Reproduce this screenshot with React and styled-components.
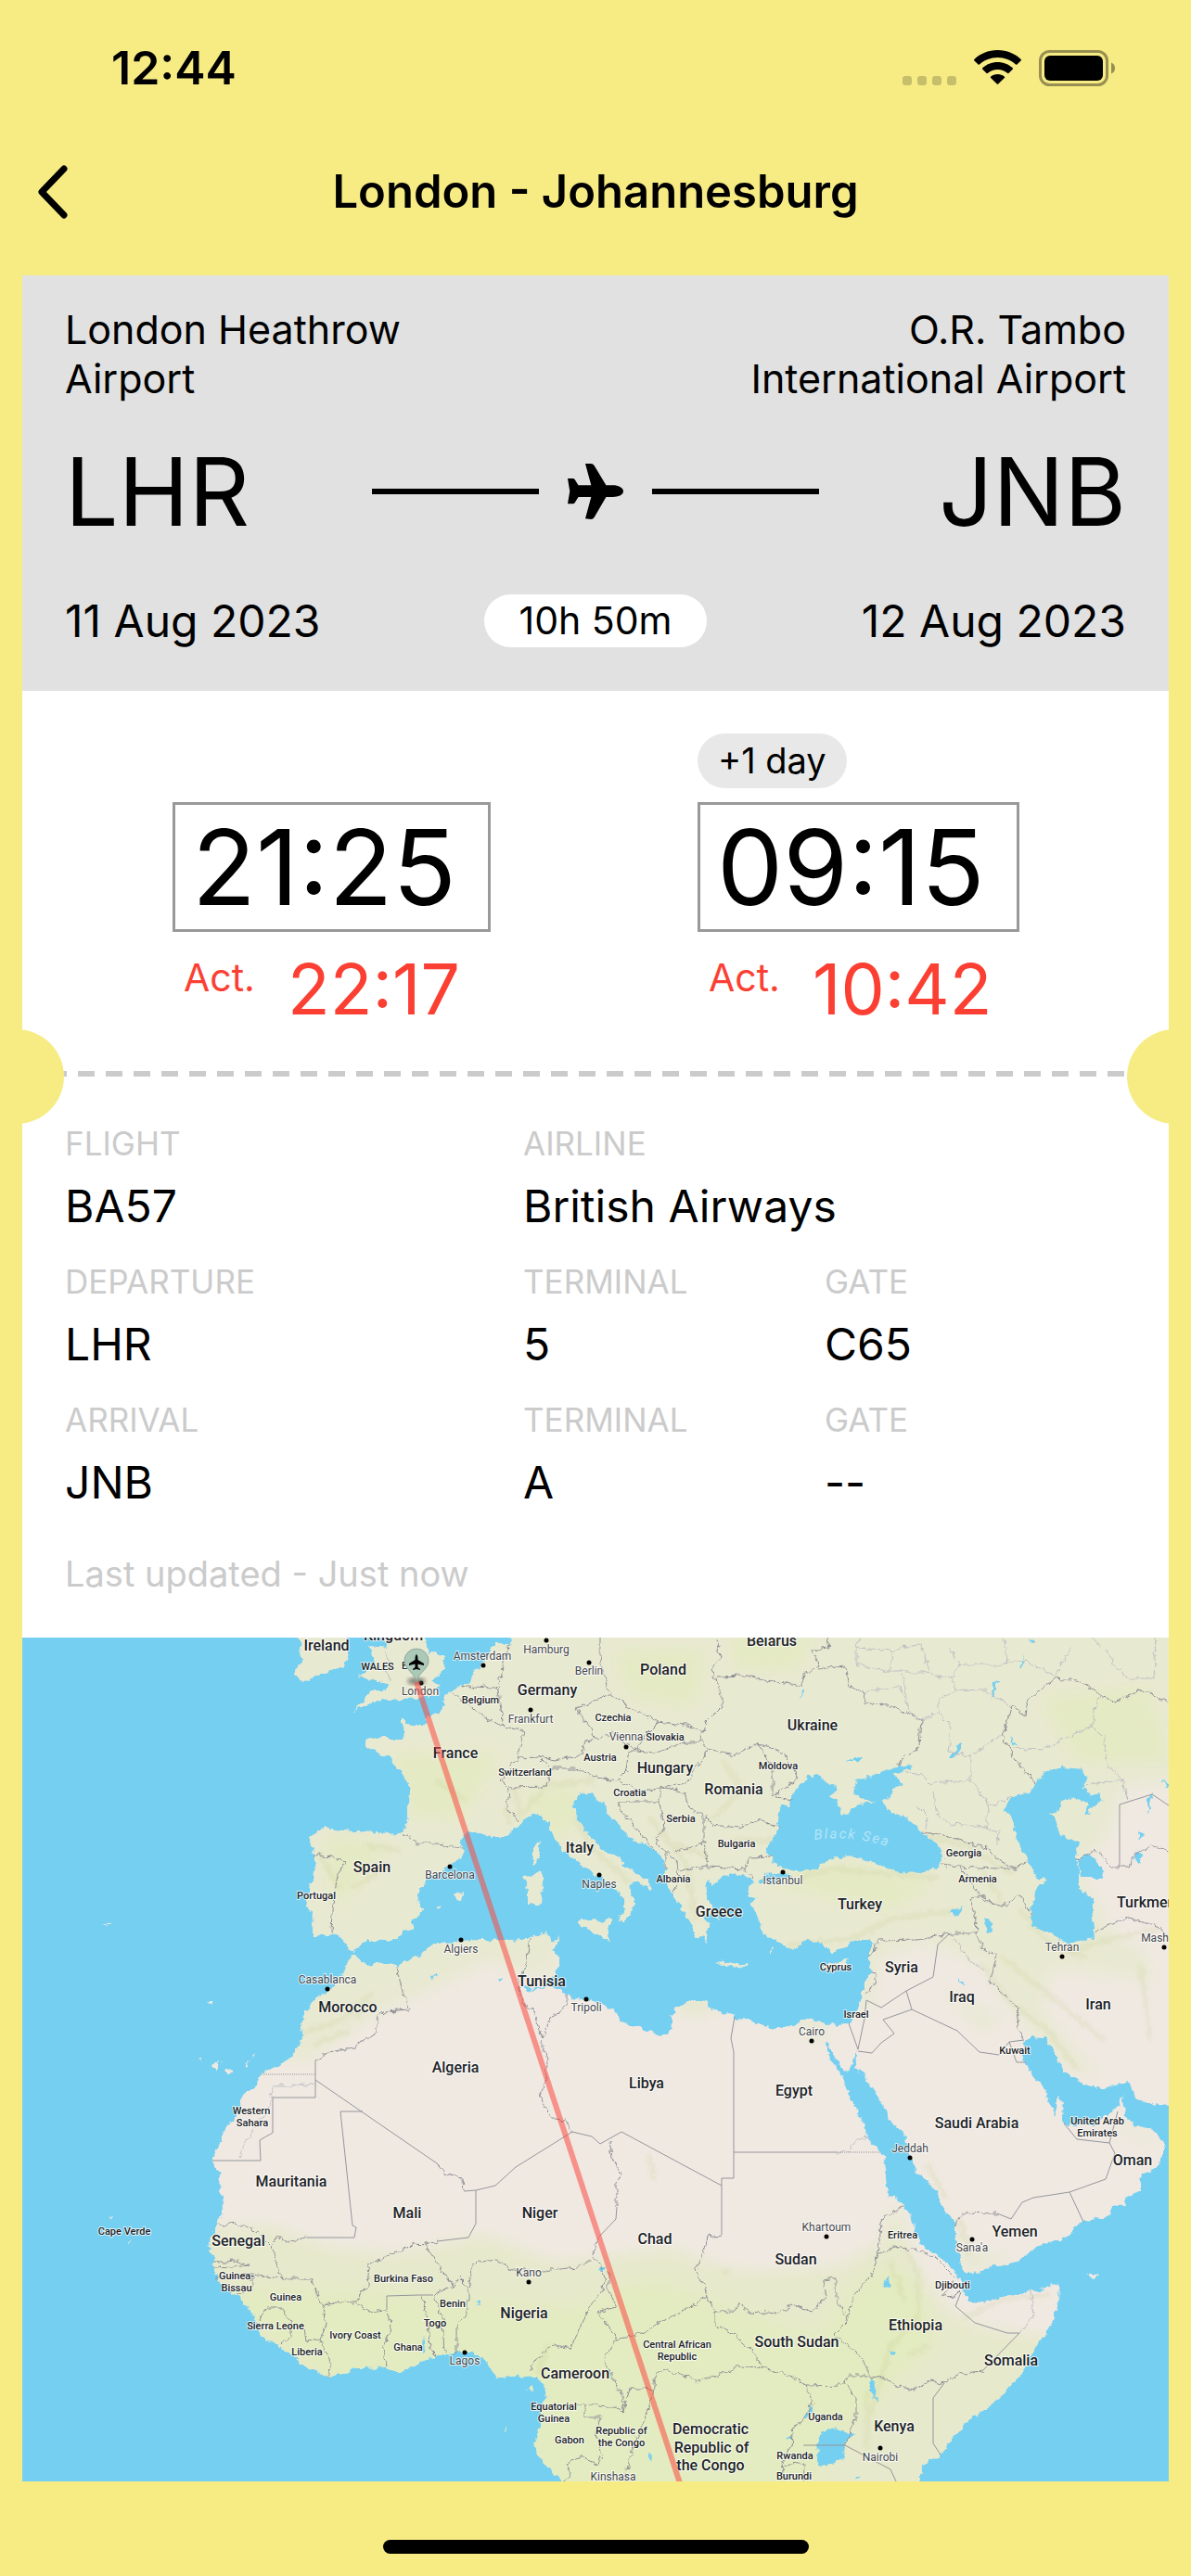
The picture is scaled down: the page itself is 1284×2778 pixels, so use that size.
import styled, { createGlobalStyle } from "styled-components";

const YELLOW = "#f7ec84";
const SEA = "#75cff0";

const GlobalStyle = createGlobalStyle`
    * {
        box-sizing: border-box;
        margin: 0;
        padding: 0;
    }

    body {
        background-color: ${YELLOW};
        color: black;
        font-family: Inter, "Liberation Sans", sans-serif;
        overflow-x: hidden;
    }
`;

const Screen = styled.div`
    width: 100%;
    overflow: hidden;
`;

const StatusBar = styled.div`
    display: flex;
    justify-content: space-between;
    padding: 48px 82px 19px 120px;
`;

const Clock = styled.time`
    font-size: 50px;
    line-height: 50px;
    font-weight: 600;
`;

const StatusIcons = styled.div`
    display: flex;
    align-items: center;
    gap: 19px;
`;

const Header = styled.header`
    display: grid;
    grid-template-columns: 100px 1fr 100px;
    align-items: center;
    height: 180px;
`;

const BackButton = styled.button`
    display: flex;
    align-items: center;
    height: 100px;
    padding-left: 38px;
    border: none;
    background: none;
    cursor: pointer;
`;

const Title = styled.h1`
    font-size: 49px;
    line-height: 60px;
    font-weight: 600;
    text-align: center;
`;

const Ticket = styled.main`
    margin: 0 24px;
    background-color: white;
`;

const Summary = styled.section`
    padding: 32px 46px 47px;
    background-color: #e1e1e1;
`;

const Airports = styled.div`
    display: flex;
    justify-content: space-between;
    font-size: 43px;
    line-height: 53px;
`;

const AirportName = styled.p`
    width: 430px;
    text-align: ${({ $end }) => ($end ? "right" : "left")};
`;

const Codes = styled.div`
    display: grid;
    grid-template-columns: 1fr auto 1fr;
    align-items: center;
    margin: 42px 0 58px;
`;

const Code = styled.strong`
    font-size: 102px;
    line-height: 106px;
    font-weight: 400;
    text-align: ${({ $end }) => ($end ? "right" : "left")};
`;

const Track = styled.div`
    display: flex;
    align-items: center;
    gap: 31px;
`;

const TrackLine = styled.span`
    width: 180px;
    height: 6px;
    background-color: black;
`;

const Dates = styled.div`
    display: grid;
    grid-template-columns: 1fr auto 1fr;
    align-items: center;
`;

const FlightDate = styled.time`
    font-size: 48px;
    line-height: 57px;
    text-align: ${({ $end }) => ($end ? "right" : "left")};
`;

const Duration = styled.span`
    padding: 0 37px;
    border-radius: 29px;
    background-color: white;
    font-size: 41px;
    line-height: 57px;
`;

const Times = styled.section`
    display: grid;
    grid-template-columns: 566fr 508fr;
    padding: 46px 0 5px 162px;
`;

const TimeColumn = styled.div`
    display: flex;
    flex-direction: column;
    align-items: flex-start;
`;

const DayShift = styled.div`
    height: 59px;
    margin-bottom: 15px;
`;

const DayBadge = styled.span`
    display: block;
    padding: 0 22px;
    border-radius: 30px;
    background-color: #e8e8e8;
    font-size: 38px;
    line-height: 59px;
`;

const Scheduled = styled.time`
    padding: 0 34px 0 18px;
    border: 3px solid #999999;
    font-size: 113px;
    line-height: 134px;
`;

const Actual = styled.div`
    display: flex;
    gap: 35px;
    margin: 24px 0 0 12px;
    color: #fb4033;
    font-size: 41px;
    line-height: 50px;
`;

const ActualTime = styled.time`
    font-size: 75px;
    line-height: 76px;
`;

const Tear = styled.div`
    position: relative;
    height: 102px;
    padding-top: 45px;
`;

const TearLine = styled.div`
    height: 6px;
    background: repeating-linear-gradient(to right, #cbcbcb 0 18px, transparent 18px 30px);
`;

const Notch = styled.span`
    position: absolute;
    top: 0;
    ${({ $side }) => $side}: -57px;
    width: 102px;
    height: 102px;
    border-radius: 50%;
    background-color: ${YELLOW};
`;

const Details = styled.dl`
    display: grid;
    grid-template-columns: 494fr 325fr 325fr;
    row-gap: 30px;
    margin: 0 46px;
`;

const Detail = styled.div`
    display: flex;
    flex-direction: column;
    gap: 17px;
    grid-column: span ${({ $span }) => $span || 1};
`;

const DetailLabel = styled.dt`
    color: #cbcbcb;
    font-size: 35px;
    line-height: 42px;
    text-transform: uppercase;
`;

const DetailValue = styled.dd`
    font-size: 48px;
    line-height: 60px;
`;

const Updated = styled.p`
    padding: 44px 46px 45px;
    color: #cbcbcb;
    font-size: 38px;
    line-height: 48px;
`;

const MapDrawing = styled.svg`
    display: block;
    width: 100%;
    height: auto;
    font-family: Roboto, "Open Sans", sans-serif;
`;

const CountryLabel = styled.text`
    fill: #202326;
    font-size: ${({ $small }) => ($small ? 11 : 16)}px;
    font-weight: 500;
    text-anchor: ${({ $start }) => ($start ? "start" : "middle")};
    paint-order: stroke;
    stroke: rgba(255, 255, 255, 0.75);
    stroke-width: 2px;
    stroke-linejoin: round;
`;

const CityLabel = styled(CountryLabel)`
    fill: #44474b;
    font-size: 12px;
    font-weight: 400;
`;

const SeaLabel = styled.text`
    fill: #b5e6fa;
    font-size: 15px;
    font-style: italic;
    letter-spacing: 2px;
`;

const HomeArea = styled.footer`
    display: flex;
    justify-content: center;
    padding: 63px 0 24px;
`;

const HomeIndicator = styled.span`
    width: 459px;
    height: 15px;
    border-radius: 8px;
    background-color: black;
`;

const details = [
    { label: "Flight", value: "BA57" },
    { label: "Airline", value: "British Airways", span: 2 },
    { label: "Departure", value: "LHR" },
    { label: "Terminal", value: "5" },
    { label: "Gate", value: "C65" },
    { label: "Arrival", value: "JNB" },
    { label: "Terminal", value: "A" },
    { label: "Gate", value: "--" },
];

const countries = [
    ["Ireland", 352, 1780], ["Kingdom", 424, 1769], ["France", 491, 1896], ["Germany", 590, 1828],
    ["Spain", 401, 2019], ["Italy", 625, 1998], ["Poland", 715, 1806], ["Belarus", 832, 1775],
    ["Ukraine", 876, 1866], ["Hungary", 717, 1912], ["Romania", 791, 1935], ["Greece", 775, 2067],
    ["Turkey", 927, 2059], ["Morocco", 375, 2170], ["Tunisia", 584, 2142], ["Algeria", 491, 2235],
    ["Mauritania", 314, 2358], ["Libya", 697, 2252], ["Egypt", 856, 2260], ["Syria", 972, 2127],
    ["Iraq", 1037, 2159], ["Iran", 1184, 2167], ["Saudi Arabia", 1053, 2295], ["Oman", 1221, 2335],
    ["Mali", 439, 2392], ["Niger", 582, 2392], ["Senegal", 257, 2422], ["Nigeria", 565, 2500],
    ["Cameroon", 620, 2565], ["Chad", 706, 2420], ["Sudan", 858, 2442], ["South Sudan", 859, 2531],
    ["Ethiopia", 987, 2513], ["Yemen", 1094, 2412], ["Somalia", 1090, 2551], ["Kenya", 964, 2622],
    ["Democratic", 766, 2625], ["Republic of", 767, 2645], ["the Congo", 766, 2664],
];

const smallCountries = [
    ["Belgium", 518, 1837], ["Switzerland", 566, 1915], ["Czechia", 661, 1856], ["Slovakia", 717, 1877],
    ["Austria", 647, 1899], ["Croatia", 679, 1937], ["Serbia", 734, 1965], ["Moldova", 839, 1908],
    ["Bulgaria", 794, 1992], ["Albania", 726, 2030], ["Georgia", 1039, 2002], ["Armenia", 1054, 2030],
    ["Portugal", 341, 2048], ["Cyprus", 901, 2125], ["Israel", 923, 2176], ["Kuwait", 1094, 2215],
    ["United Arab", 1183, 2291], ["Emirates", 1183, 2304], ["Western", 271, 2280], ["Sahara", 272, 2293],
    ["Cape Verde", 134, 2410], ["Guinea-", 255, 2458], ["Bissau", 255, 2471], ["Guinea", 308, 2481],
    ["Sierra Leone", 297, 2512], ["Liberia", 331, 2540], ["Ivory Coast", 383, 2522], ["Ghana", 440, 2535],
    ["Togo", 469, 2509], ["Benin", 488, 2488], ["Burkina Faso", 435, 2461], ["Equatorial", 597, 2599],
    ["Guinea", 597, 2612], ["Gabon", 614, 2635], ["Republic of", 670, 2625], ["the Congo", 670, 2638],
    ["Central African", 730, 2532], ["Republic", 730, 2545], ["Eritrea", 973, 2414], ["Djibouti", 1027, 2468],
    ["Uganda", 890, 2610], ["Rwanda", 857, 2652], ["Burundi", 856, 2674],
];

// name, label x, label y, dot x, dot y
const cities = [
    ["London", 453, 1828, 454, 1815], ["Amsterdam", 520, 1790, 521, 1796], ["Hamburg", 589, 1783, 589, 1769],
    ["Berlin", 635, 1806, 635, 1793], ["Frankfurt", 572, 1858, 572, 1844], ["Vienna", 675, 1877, 675, 1884],
    ["Barcelona", 485, 2026, 485, 2013], ["Naples", 646, 2036, 646, 2022], ["Istanbul", 844, 2032, 844, 2019],
    ["Algiers", 497, 2106, 497, 2092], ["Casablanca", 353, 2139, 353, 2145], ["Tripoli", 632, 2169, 632, 2156],
    ["Cairo", 875, 2195, 875, 2201], ["Tehran", 1145, 2104, 1145, 2110], ["Mashhad", 1255, 2094, 1255, 2100],
    ["Jeddah", 981, 2321, 981, 2327], ["Khartoum", 891, 2406, 891, 2412], ["Sana'a", 1048, 2428, 1048, 2415],
    ["Kano", 570, 2455, 570, 2461], ["Lagos", 501, 2550, 501, 2537], ["Nairobi", 949, 2654, 949, 2640],
    ["Kinshasa", 661, 2675, 661, 2690],
];

const MAINLAND = `M551 1740V1768L549 1773 532 1773 528 1780 522 1793 511 1803 507 1815 488 1823 479 1827 478 1840 471 1848 459 1853
457 1861 445 1861 438 1858 438 1855 431 1855 435 1863 436 1876 421 1876 415 1873 396 1875 394 1880 398 1887 408 1890 421 1897
429 1908 440 1923 441 1933 440 1953 437 1973 429 1978 404 1976 379 1975 358 1973 351 1970 345 1975 333 1982 338 1993 340 2017
330 2050 333 2062 338 2063 337 2087 349 2088 364 2086 370 2092 375 2100 381 2105 385 2100 396 2093 429 2092 434 2082 445 2079
446 2070 457 2059 450 2050 452 2037 463 2023 476 2017 488 2009 499 2002 498 1993 496 1983 503 1975 518 1977 537 1982 547 1979
558 1970 566 1960 575 1957 585 1960 593 1967 598 1983 608 1997 623 2007 636 2017 647 2024 663 2035 671 2047 672 2060 667 2071
673 2073 678 2063 685 2053 679 2043 678 2033 683 2028 697 2035 701 2039 704 2035 693 2025 675 2013 669 2003 652 1997 643 1988
631 1975 621 1962 619 1943 623 1937 639 1933 648 1945 652 1943 656 1957 667 1968 681 1983 704 1993 716 2005 718 2017 716 2023
722 2040 737 2060 741 2068 748 2078 749 2090 757 2089 762 2096 761 2082 767 2077 757 2070 767 2065 776 2073 773 2065 763 2050
761 2033 763 2027 769 2033 776 2025 792 2020 806 2023 812 2029 808 2032 806 2045 817 2047 810 2055 817 2067 821 2073 823 2087
833 2090 845 2098 858 2102 866 2092 882 2095 897 2105 911 2100 923 2092 938 2092 941 2097 937 2107 938 2127 932 2143 924 2167
916 2182 891 2184 872 2177 858 2182 845 2188 825 2185 804 2177 792 2178 790 2172 767 2167 763 2159 749 2156 728 2165 724 2175
725 2188 712 2197 693 2187 669 2182 661 2167 648 2161 631 2157 610 2152 604 2145 589 2143 574 2147 572 2145 585 2143 593 2135
604 2120 602 2110 596 2105 604 2088 597 2095 591 2085 585 2084 568 2091 535 2093 522 2092 497 2093 467 2097 455 2108 442 2112
429 2121 415 2117 396 2119 387 2115 382 2107 377 2110 372 2127 354 2147 335 2160 324 2180 327 2197 318 2215 299 2229 281 2235
276 2250 262 2259 255 2282 244 2293 236 2315 229 2327 229 2333 237 2345 236 2360 242 2372 236 2397 223 2423 231 2433 231 2450
240 2465 257 2477 274 2497 284 2520 303 2532 337 2557 354 2564 383 2554 415 2553 429 2559 459 2545 490 2537 511 2537 522 2543
535 2564 568 2562 585 2570 589 2583 583 2600 583 2620 575 2635 581 2648 593 2663 606 2676V2710H990V2676L995 2658 1014 2647
1036 2618 1075 2588 1100 2563 1116 2533 1135 2502 1141 2483 1142 2465 1135 2463 1129 2468 1088 2475 1059 2483 1047 2482
1036 2467 1036 2460 1030 2452 1018 2437 993 2420 987 2407 981 2387 969 2373 958 2367 954 2333 950 2320 934 2305 932 2290
919 2267 907 2237 893 2217 890 2203 894 2204 899 2217 909 2232 915 2234 919 2223 923 2210 924 2218 921 2230 927 2232 942 2253
956 2277 958 2287 973 2297 981 2323 989 2343 1006 2358 1016 2380 1030 2398 1030 2420 1036 2437 1038 2450 1055 2452 1067 2445
1100 2437 1120 2422 1153 2412 1157 2402 1168 2396 1194 2390 1199 2380 1213 2378 1215 2368 1229 2363 1231 2343 1244 2340
1252 2327 1258 2315 1244 2298 1223 2293 1213 2282 1211 2260 1205 2273 1190 2282 1178 2292 1149 2292 1145 2285 1146 2267
1142 2261 1138 2267 1139 2283 1131 2267 1127 2250 1112 2238 1102 2217 1104 2202 1112 2197 1127 2198 1147 2233 1166 2247
1190 2253 1207 2247 1217 2245 1225 2263 1248 2270 1290 2272V1740Z`;

const ISLANDS = `M415 1740V1766L417 1777 396 1775 402 1786 402 1800 387 1806 395 1812 420 1816 415 1823 400 1823 392 1835 381 1845
398 1838 408 1832 421 1834 446 1832 470 1828 474 1818 465 1813 478 1800 478 1787 472 1783 462 1784 459 1772 457 1740Z
M322 1740V1766L326 1773 322 1780 328 1790 318 1800 320 1807 326 1814 349 1803 370 1797 375 1783 372 1740Z
M582 1985 572 1997 577 2012 582 2003Z M566 2025 583 2017 586 2027 583 2052 569 2055 569 2038Z
M623 2073 627 2070 644 2072 660 2069 656 2080 658 2093 640 2085Z
M771 2115 788 2117 807 2120 804 2122 780 2119Z M886 2122 897 2118 915 2113 909 2121 899 2127Z
M488 2043 499 2040 497 2048 492 2047Z M229 2227 238 2223 233 2233Z M244 2232 250 2231 248 2236 245 2236Z
M215 2219 218 2219 217 2224Z M265 2229 269 2221 268 2228Z M270 2218 274 2214 273 2217Z M1172 2453 1185 2453 1180 2457Z
M569 2577 575 2573 573 2579Z M543 2620 546 2618 545 2622Z M116 2392 120 2390 119 2394Z M137 2419 141 2418 139 2422Z
M225 2158 231 2158 228 2160Z M110 2075 118 2075 117 2077Z M829 2108 834 2100 832 2106Z M473 2056 477 2054 475 2058Z
M776 2058 784 2062 788 2070 780 2064Z`;

const INLAND_WATER = `M831 2003 825 1993 837 1977 840 1957 843 1947 851 1947 854 1933 866 1922 870 1915 886 1915 888 1922 903 1925
901 1932 893 1938 903 1942 907 1957 915 1955 923 1947 944 1943 927 1940 919 1927 927 1918 948 1913 969 1905 981 1902 982 1907
964 1913 973 1923 962 1930 960 1938 950 1940 956 1952 977 1960 993 1975 1012 1990 1016 2003 1012 2013 993 2020 969 2019
940 2008 925 2002 903 2003 888 2008 876 2017 849 2017 837 2012Z
M817 2027 825 2022 845 2020 854 2023 837 2029 821 2031Z
M1116 1923 1129 1910 1145 1906 1168 1908 1172 1920 1168 1928 1178 1937 1184 1932 1191 1942 1178 1947 1172 1957 1170 1955
1174 1943 1149 1939 1143 1943 1144 1953 1131 1955 1139 1963 1145 1980 1162 1987 1160 2003 1164 2017 1164 2037 1178 2048
1178 2070 1180 2090 1153 2096 1141 2090 1129 2083 1112 2077 1111 2060 1116 2047 1120 2033 1129 2028 1118 2027 1108 2007
1096 1983 1092 1963 1083 1955 1090 1938 1108 1933Z
M1162 2005 1174 1998 1182 2007 1190 2017 1186 2025 1166 2025Z
M882 2627 890 2621 903 2618 911 2623 922 2625 912 2632 907 2653 891 2657 881 2658Z
M938 2563 942 2566 944 2583 947 2590 942 2585 937 2575Z M952 2459 959 2457 959 2465 955 2466Z
M864 2607 870 2600 877 2594 876 2600 868 2609Z M1061 2069 1069 2074 1070 2083 1064 2085Z M1024 2062 1038 2055 1035 2061 1030 2067Z
M1033 2134 1039 2138 1038 2143Z M456 2520 458 2533 454 2537Z M848 2630 854 2625 852 2631Z M699 2645 703 2647 702 2656Z
M910 1899 928 1895 928 1899Z M1037 1879 1037 1886 1028 1895 1022 1895Z M863 1822 866 1822 865 1833Z M1088 1873 1096 1880 1092 1881Z
M1105 1785 1102 1799 1099 1799Z M1110 1766 1116 1772 1112 1774Z M1078 1810 1069 1834 1071 1815Z M1242 1930 1238 1957 1236 1945Z
M1227 1974 1234 1978 1229 1983Z M1226 1996 1232 2000 1228 2009 1222 2004Z M565 2144 575 2142 570 2148Z M466 2130 470 2129 468 2134Z
M538 2132 543 2133 540 2136Z M645 2446 653 2445 650 2450Z M514 2481 518 2482 516 2487Z M958 2536 966 2535 963 2541Z
M922 2673 929 2670 925 2674Z M1254 1920 1260 1925 1256 1930Z`;

// borders that follow rivers and ridges
const BORDERS = `M490 1825 499 1835 522 1852 543 1862 565 1867 558 1896 539 1920 549 1930 547 1950 558 1965
M497 1820 522 1817 537 1823 541 1850 543 1862M537 1823 541 1797 549 1773M558 1896 581 1895 593 1907 589 1927 549 1928
M593 1907 619 1907 644 1917 665 1920 675 1910 677 1893 685 1887M581 1895 598 1899 627 1893 631 1877 644 1875 661 1868 685 1887
M644 1875 621 1843 657 1827 677 1840 710 1857 697 1870 685 1887M647 1766 647 1787 656 1825M710 1857 739 1860 761 1866
M773 1766 777 1787 767 1800 778 1828 778 1840 761 1857 755 1878M773 1808 804 1807 833 1813 866 1818 868 1805 882 1797 876 1780
893 1777 891 1766M882 1800 911 1797 915 1818 932 1825 934 1837 958 1838 993 1855 991 1883 971 1897 969 1905
M685 1888 706 1890 739 1878 755 1878 763 1887 741 1923 714 1927 689 1932 667 1920M763 1887 792 1893 817 1880 845 1890 860 1918
833 1937 854 1942M817 1880 833 1907 833 1937M759 1957 767 1968 796 1971 817 1963 840 1970M714 1927 739 1933 743 1950 759 1957
759 1987 763 2013 804 2015 808 2003 831 2002M667 1943 669 1953 704 1993M667 1943 712 1943 716 1973 706 1987M712 1927 712 1943
M718 1997 730 2007 732 2027 726 2043M730 1997 759 1987M732 2017 763 2013M718 2017 718 1997 706 1987M804 2015 812 2027
M338 2003 345 2000 372 2007 364 2023 361 2040 358 2060 357 2086M434 1977 450 1988 471 1988 498 1994
M1090 1840 1106 1850 1108 1833 1137 1810 1162 1813 1186 1827 1203 1835 1231 1823 1260 1835M1090 1840 1081 1873 1092 1893 1116 1923
M993 1975 1026 1982 1063 1993 1079 2007 1096 2015 1108 2006M1014 2011 1034 2013 1075 2015 1096 2015M1034 2013 1047 2030 1060 2048 1079 2057
M1053 2085 1051 2060 1047 2047 1060 2045 1079 2057 1100 2043 1111 2065M946 2093 989 2092 1024 2085 1053 2085 1059 2100 1075 2110
1067 2137 1096 2163 1098 2187 1104 2200M1160 2005 1182 1995 1199 2013 1219 2013 1223 2000 1242 1990 1260 1997
M1180 2083 1213 2068 1252 2078 1258 2090M938 2127 944 2128 944 2138 934 2150M946 2093 943 2105 937 2110
M427 2121 434 2147 441 2167 417 2169 406 2177 406 2192 381 2208 354 2212 340 2222
M572 2091 566 2120 558 2137 564 2160 577 2170 584 2198 593 2177 610 2162 610 2152M583 2200 589 2220 588 2247 582 2259 593 2283
610 2288 617 2299M471 2333 480 2343 499 2350 500 2363M237 2400 253 2397 278 2408 293 2423 303 2457 271 2453 231 2457
M271 2453 271 2465 255 2475M231 2440 253 2438 269 2442 250 2444 231 2445M303 2457 335 2457 347 2485 351 2507 345 2523 330 2525 328 2510
M278 2500 288 2489 305 2489 314 2507 314 2518 303 2530M345 2523 357 2547 354 2564M347 2485 370 2482 383 2483
M293 2423 299 2412 309 2418 330 2413M471 2417 459 2421 446 2420 417 2433 398 2443 396 2463 383 2483 398 2493 415 2491 420 2497 421 2513
412 2530 418 2553M467 2475 488 2465 471 2440 459 2421M455 2475 461 2500 463 2533 471 2541M467 2475 477 2497 479 2538
M488 2465 495 2457 505 2467M638 2438 623 2445 585 2449 551 2447 535 2437 511 2440 505 2467 505 2493 492 2510 492 2538
M646 2412 638 2428 652 2453 650 2468 636 2487 615 2533 596 2528 575 2547 572 2557M762 2477 734 2493 710 2505 685 2520 665 2522
643 2493 665 2488 656 2470 656 2450M665 2522 650 2543 671 2583 672 2600 679 2575 704 2577M621 2593 660 2595 672 2600
M823 2553 796 2552 755 2568 718 2555 706 2563 704 2583 695 2610 681 2643 673 2676M631 2594 631 2607 648 2607 642 2623 650 2647
644 2657 625 2650 610 2657 615 2670 606 2676M778 2410 763 2412 759 2430 749 2450 759 2463 762 2477 772 2493 772 2507 790 2517
810 2535 823 2553 854 2563 870 2573 907 2572 915 2562 936 2562 936 2552 923 2537 899 2517 913 2503 919 2477 936 2457 942 2450
946 2430 952 2392 973 2380M772 2493 792 2492 796 2483 808 2493 841 2495 854 2485 876 2493 891 2475 888 2460 901 2458 901 2477 912 2497
M946 2430 964 2423 993 2427 1010 2437 1030 2457M1016 2477 1028 2460M1016 2477 1030 2476 1036 2470M938 2563 952 2564 969 2574 987 2577 1003 2567 1018 2570 1038 2559
1059 2557M911 2567 923 2587 923 2607 911 2637M870 2573 876 2593 854 2623 853 2640 843 2657 847 2676M843 2660 868 2655 866 2676
M657 2307 660 2327 670 2345 665 2353 665 2380M1030 2400 1038 2386 1075 2387`;

const STRAIGHT_BORDERS = `M340 2222V2262H294V2300L280 2308 281 2330H229M340 2243 471 2333M500 2363 513 2362 534 2357 556 2337 617 2299
638 2304 647 2312 670 2299 778 2357M391 2277H367L380 2400 384 2402 382 2413H330M513 2362V2398L505 2413 471 2417
M792 2175 788 2198 791 2213V2349H778V2410M791 2321H902M417 2491V2476L452 2475H467M665 2380 664 2393 646 2412
M925 2212 940 2214 950 2203 964 2193 952 2178 983 2167 1032 2190 1056 2213 1077 2216 1088 2202 1104 2200M1088 2202 1096 2224H1106
M934 2157 950 2165 977 2147 983 2167M977 2147 1006 2132 1011 2097 1024 2085M915 2182 925 2210 932 2177 934 2157
M1147 2290 1161 2307 1196 2311 1202 2322 1192 2350 1153 2364 1114 2370 1102 2375 1090 2393 1075 2387M1153 2364 1168 2396M1196 2311 1205 2277
M1059 2557 1099 2516 1086 2516 1051 2505 1030 2487 1036 2472M1018 2570 1006 2586V2635L1014 2647M866 2637H911L960 2663 966 2676
M1260 1947 1242 1935 1207 1946V2013`;

const REGIONS = `M926 1766 923 1777 923 1795 960 1803 993 1803 1026 1810 1034 1795 1075 1795 1108 1790 1137 1808 1155 1777M962 1780 960 1803
M923 1777 962 1780 993 1773 1003 1802M1022 1773 1034 1795M1083 1766 1085 1795M971 1805 981 1847 993 1855M1026 1810 1030 1822 1012 1833 1012 1847 993 1855
M1030 1822 1063 1823 1090 1840M1012 1847 1026 1863 1022 1890 1047 1893 1047 1920 1067 1947 1090 1938M1047 1893 1075 1873 1081 1873
M1092 1885 1125 1887 1149 1873 1176 1863 1186 1827M1176 1863 1190 1873 1194 1903 1213 1923 1216 1942M977 1912 993 1913 1001 1923 1047 1920
M1006 1933 1010 1957 1026 1967 1063 1970 1067 1947M932 1825 969 1818 979 1840M1178 1766 1215 1810 1244 1810 1246 1766M985 1945 1000 1960 998 1972
M1063 1970 1078 1975 1075 1990M1172 1925 1209 1918 1216 1942M1112 2470 1114 2500 1099 2516M292 2262 296 2249 315 2249 340 2247M294 2264 280 2290 265 2310 258 2328
M1024 2085 1040 2105 1045 2115 1060 2125M902 2321 914 2320 924 2309 934 2305M415 1777 419 1795 416 1803 420 1812`;

function Plane({ size = 60 }) {
    return (
        <svg width={size} height={size} viewBox="0 0 60 60" aria-hidden="true">
            <path d="M60 29.8C60 25.6 54 23.2 49 23.2H41.4L28.6 2Q27.4 0 25 0H19L25.3 23.2H11.5L7.6 17Q7 16 5.6 16H0L2.3 29.8 0 43.2H5.6Q7 43.2 7.6 42.2L11.5 36H25.3L19 59.2 25 60Q27.4 60 28.6 58L41.4 36H49C54 36 60 34 60 29.8Z" />
        </svg>
    );
}

function StatusGlyphs() {
    return (
        <StatusIcons>
            <svg width="58" height="40" viewBox="0 0 58 40" fill="#c7be6b" aria-hidden="true">
                {[0, 16, 32, 48].map(x => (
                    <rect key={x} x={x} y="29" width="10" height="10" rx="3" />
                ))}
            </svg>
            <svg width="51" height="38" viewBox="0 0 51 38" aria-hidden="true">
                <path d="M25.5 0C15.5 0 6.7 3.9.3 10Q-.2 10.7.4 11.4L4.6 15.6Q5.3 16.1 6 15.5C11.2 10.8 18 8 25.5 8S39.8 10.8 45 15.5Q45.7 16.1 46.4 15.6L50.6 11.4Q51.2 10.7 50.7 10C44.3 3.9 35.5 0 25.5 0Z" />
                <path d="M25.5 13C19.2 13 13.5 15.4 9.2 19.3Q8.7 20 9.3 20.7L13.6 24.9Q14.3 25.4 15 24.8C17.8 22.4 21.5 21 25.5 21S33.2 22.4 36 24.8Q36.7 25.4 37.4 24.9L41.7 20.7Q42.3 20 41.8 19.3C37.5 15.4 31.8 13 25.5 13Z" />
                <path d="M25.5 26C22.6 26 20 27 18 28.7Q17.5 29.3 18.1 30L24.8 36.6Q25.5 37.2 26.2 36.6L32.9 30Q33.5 29.3 33 28.7C31 27 28.4 26 25.5 26Z" />
            </svg>
            <svg width="82" height="39" viewBox="0 0 82 39" aria-hidden="true">
                <rect x="1.5" y="1.5" width="72" height="36" rx="10" fill="none" stroke="#978f51" strokeWidth="3" />
                <rect x="6" y="6" width="63" height="27" rx="6" />
                <path d="M78 13.5Q82 15 82 19.5T78 25.5Z" fill="#978f51" />
            </svg>
        </StatusIcons>
    );
}

function RouteMap() {
    return (
        <MapDrawing viewBox="24 1766 1236 910" role="img" aria-label="Route map">
            <defs>
                <filter id="rough" filterUnits="userSpaceOnUse" x="0" y="1740" width="1300" height="960">
                    <feTurbulence type="fractalNoise" baseFrequency="0.13" numOctaves="3" seed="4" />
                    <feDisplacementMap in="SourceGraphic" scale="8" xChannelSelector="R" yChannelSelector="G" />
                </filter>
                <filter id="soft" filterUnits="userSpaceOnUse" x="0" y="1700" width="1300" height="1040">
                    <feGaussianBlur stdDeviation="9" />
                </filter>
                <filter id="shade">
                    <feGaussianBlur stdDeviation="2" />
                </filter>
                <clipPath id="land">
                    <path d={MAINLAND} />
                    <path d={ISLANDS} />
                </clipPath>
            </defs>
            <rect x="0" y="1740" width="1300" height="960" fill={SEA} />
            <g filter="url(#rough)">
                <g clipPath="url(#land)">
                    <rect x="0" y="1740" width="1300" height="960" fill="#f0e9e2" />
                    <g filter="url(#soft)">
                        <path fill="#e8e9d1" d="M0 1690H1320V1925L1215 1925 1190 1990 1160 2010 1200 2085 1230 2100 1250 2140 1200 2130 1130 2125 1125 2170 1160 2210 1190 2240 1150 2230 1100 2180 1060 2120 1000 2095 950 2110 940 2160 925 2180 915 2120 790 2130 600 2100 600 2130 560 2130 530 2115 460 2150 420 2165 380 2190 330 2225 300 2220 300 2050Z" />
                        <path fill="#e6e9cb" d="M200 2404 290 2400 360 2425 430 2430 520 2410 600 2440 680 2430 720 2425 800 2450 900 2445 950 2420 965 2370 985 2440 1020 2490 1060 2510 1090 2515 1140 2520 1120 2720H200Z" />
                        <path fill="#e3ebc0" d="M220 2470 330 2470 480 2480 620 2490 700 2460 760 2480 880 2520 940 2450 980 2450 1010 2520 960 2570 920 2610 870 2680 700 2720 560 2720Z" />
                        <path fill="#e4eac3" d="M420 1890H540L500 1960 445 1960ZM560 1935 620 1925 630 1950 600 1990ZM660 1780H760L750 1840 680 1830ZM790 1760H880L860 1800H790ZM1120 1830 1240 1820 1260 1900 1160 1900ZM350 1980 420 1990 360 2060ZM820 2030 900 2010 1010 2030 960 2060Z" />
                        <path fill="#e5e8cd" d="M975 2310 1000 2350 1030 2400 1045 2430 1100 2435 1040 2450 1020 2390ZM730 2150H770V2172H730ZM850 2178H890V2205ZM1195 2280 1250 2310 1230 2310ZM1010 2140 1080 2180 1060 2190Z" />
                    </g>
                    <g fill="none" stroke="#c3c98a" strokeOpacity="0.28" strokeWidth="4" strokeLinecap="round" filter="url(#shade)">
                        <path d="M328 2192 370 2178 400 2150M340 2205 375 2190M380 2035 400 2025 413 2012M345 2000 365 2035M395 1990 430 1995M470 1920 500 1940M555 1930 560 1960 590 1925 640 1920M545 1950 550 1965M620 1960 640 1995 680 2030M700 1960 740 2010 750 2070M730 1990 760 2000M780 1900 800 1930 770 1960M790 1985 830 1985" />
                        <path d="M850 2098 920 2090 960 2070 1030 2060M860 2025 900 2015 950 2020 1010 2025M1000 1980 1040 1990 1090 2020M1060 2020 1080 2050M1060 2120 1090 2160 1130 2190 1160 2230M1080 2110 1130 2150 1190 2200M1150 2105 1200 2090 1250 2080M1100 2060 1130 2095 1170 2110M1230 2120 1240 2200" />
                        <path d="M975 2425 990 2450 990 2500 960 2530 940 2600M960 2440 975 2480M980 2540 1000 2530M935 2580 935 2640M1035 2395 1045 2430M1000 2335 1020 2370M700 2325 705 2350M780 2450 785 2450M1040 2500 1080 2480 1130 2475M590 2530 580 2560M400 2160 385 2175" />
                    </g>
                </g>
                <path d={INLAND_WATER} fill={SEA} />
                <path d={BORDERS} fill="none" stroke="#8e8f96" />
                <path d={REGIONS} fill="none" stroke="#bfc0c4" />
            </g>
            <path d={STRAIGHT_BORDERS} fill="none" stroke="#95969c" />
            <path d="M281 2237H340M902 2321H950" fill="none" stroke="#95969c" strokeDasharray="1 1" />
            {countries.map(([name, x, y]) => (
                <CountryLabel key={`${name}-${y}`} x={x} y={y}>{name}</CountryLabel>
            ))}
            <CountryLabel $start x="1204" y="2057">Turkmenistan</CountryLabel>
            {smallCountries.map(([name, x, y]) => (
                <CountryLabel $small key={`${name}-${y}`} x={x} y={y}>{name}</CountryLabel>
            ))}
            <CountryLabel $small x="407" y="1801">WALES</CountryLabel>
            <CountryLabel $small $start x="433" y="1800">E</CountryLabel>
            {cities.map(([name, x, y, dotX, dotY]) => (
                <g key={name}>
                    <circle cx={dotX} cy={dotY} r="2.5" />
                    <CityLabel x={x} y={y}>{name}</CityLabel>
                </g>
            ))}
            <path id="blackSea" d="M878 1984Q920 1978 965 1994" fill="none" />
            <SeaLabel>
                <textPath href="#blackSea">Black Sea</textPath>
            </SeaLabel>
            <ellipse cx="449" cy="1813" rx="10" ry="4" fill="#4a4a4a" fillOpacity="0.6" filter="url(#shade)" />
            <path d="M449 1814 735 2684" stroke="#fb4a42" strokeOpacity="0.55" strokeWidth="6" />
            <path d="M449 1813C446 1803 436 1800 436 1791A13 13 0 0 1 462 1791C462 1800 452 1803 449 1813Z" fill="#abc8b8" stroke="#8ba99b" />
            <path d="M449 1784Q450.5 1785 450.5 1790L457 1794V1796L450.5 1794.5V1798L453 1800V1801L449 1800 445 1801V1800L447.500 1798V1794.500L441 1796V1794L447.500 1790Q447.500 1785 449 1784Z" />
        </MapDrawing>
    );
}

export default function App() {
    return (
        <Screen>
            <GlobalStyle />
            <StatusBar>
                <Clock>12:44</Clock>
                <StatusGlyphs />
            </StatusBar>
            <Header>
                <BackButton type="button" aria-label="Back">
                    <svg width="38" height="60" viewBox="0 0 38 60" fill="none" stroke="black" strokeWidth="7" strokeLinecap="round" strokeLinejoin="round">
                        <path d="M31 5 7 30 31 55" />
                    </svg>
                </BackButton>
                <Title>London - Johannesburg</Title>
            </Header>
            <Ticket>
                <Summary>
                    <Airports>
                        <AirportName>London Heathrow Airport</AirportName>
                        <AirportName $end>O.R. Tambo International Airport</AirportName>
                    </Airports>
                    <Codes>
                        <Code>LHR</Code>
                        <Track>
                            <TrackLine />
                            <Plane />
                            <TrackLine />
                        </Track>
                        <Code $end>JNB</Code>
                    </Codes>
                    <Dates>
                        <FlightDate>11 Aug 2023</FlightDate>
                        <Duration>10h 50m</Duration>
                        <FlightDate $end>12 Aug 2023</FlightDate>
                    </Dates>
                </Summary>
                <Times>
                    <TimeColumn>
                        <DayShift />
                        <Scheduled>21:25</Scheduled>
                        <Actual>
                            Act.
                            <ActualTime>22:17</ActualTime>
                        </Actual>
                    </TimeColumn>
                    <TimeColumn>
                        <DayShift>
                            <DayBadge>+1 day</DayBadge>
                        </DayShift>
                        <Scheduled>09:15</Scheduled>
                        <Actual>
                            Act.
                            <ActualTime>10:42</ActualTime>
                        </Actual>
                    </TimeColumn>
                </Times>
                <Tear>
                    <TearLine />
                    <Notch $side="left" />
                    <Notch $side="right" />
                </Tear>
                <Details>
                    {details.map(({ label, value, span }, index) => (
                        <Detail key={index} $span={span}>
                            <DetailLabel>{label}</DetailLabel>
                            <DetailValue>{value}</DetailValue>
                        </Detail>
                    ))}
                </Details>
                <Updated>Last updated - Just now</Updated>
                <RouteMap />
            </Ticket>
            <HomeArea>
                <HomeIndicator />
            </HomeArea>
        </Screen>
    );
}
